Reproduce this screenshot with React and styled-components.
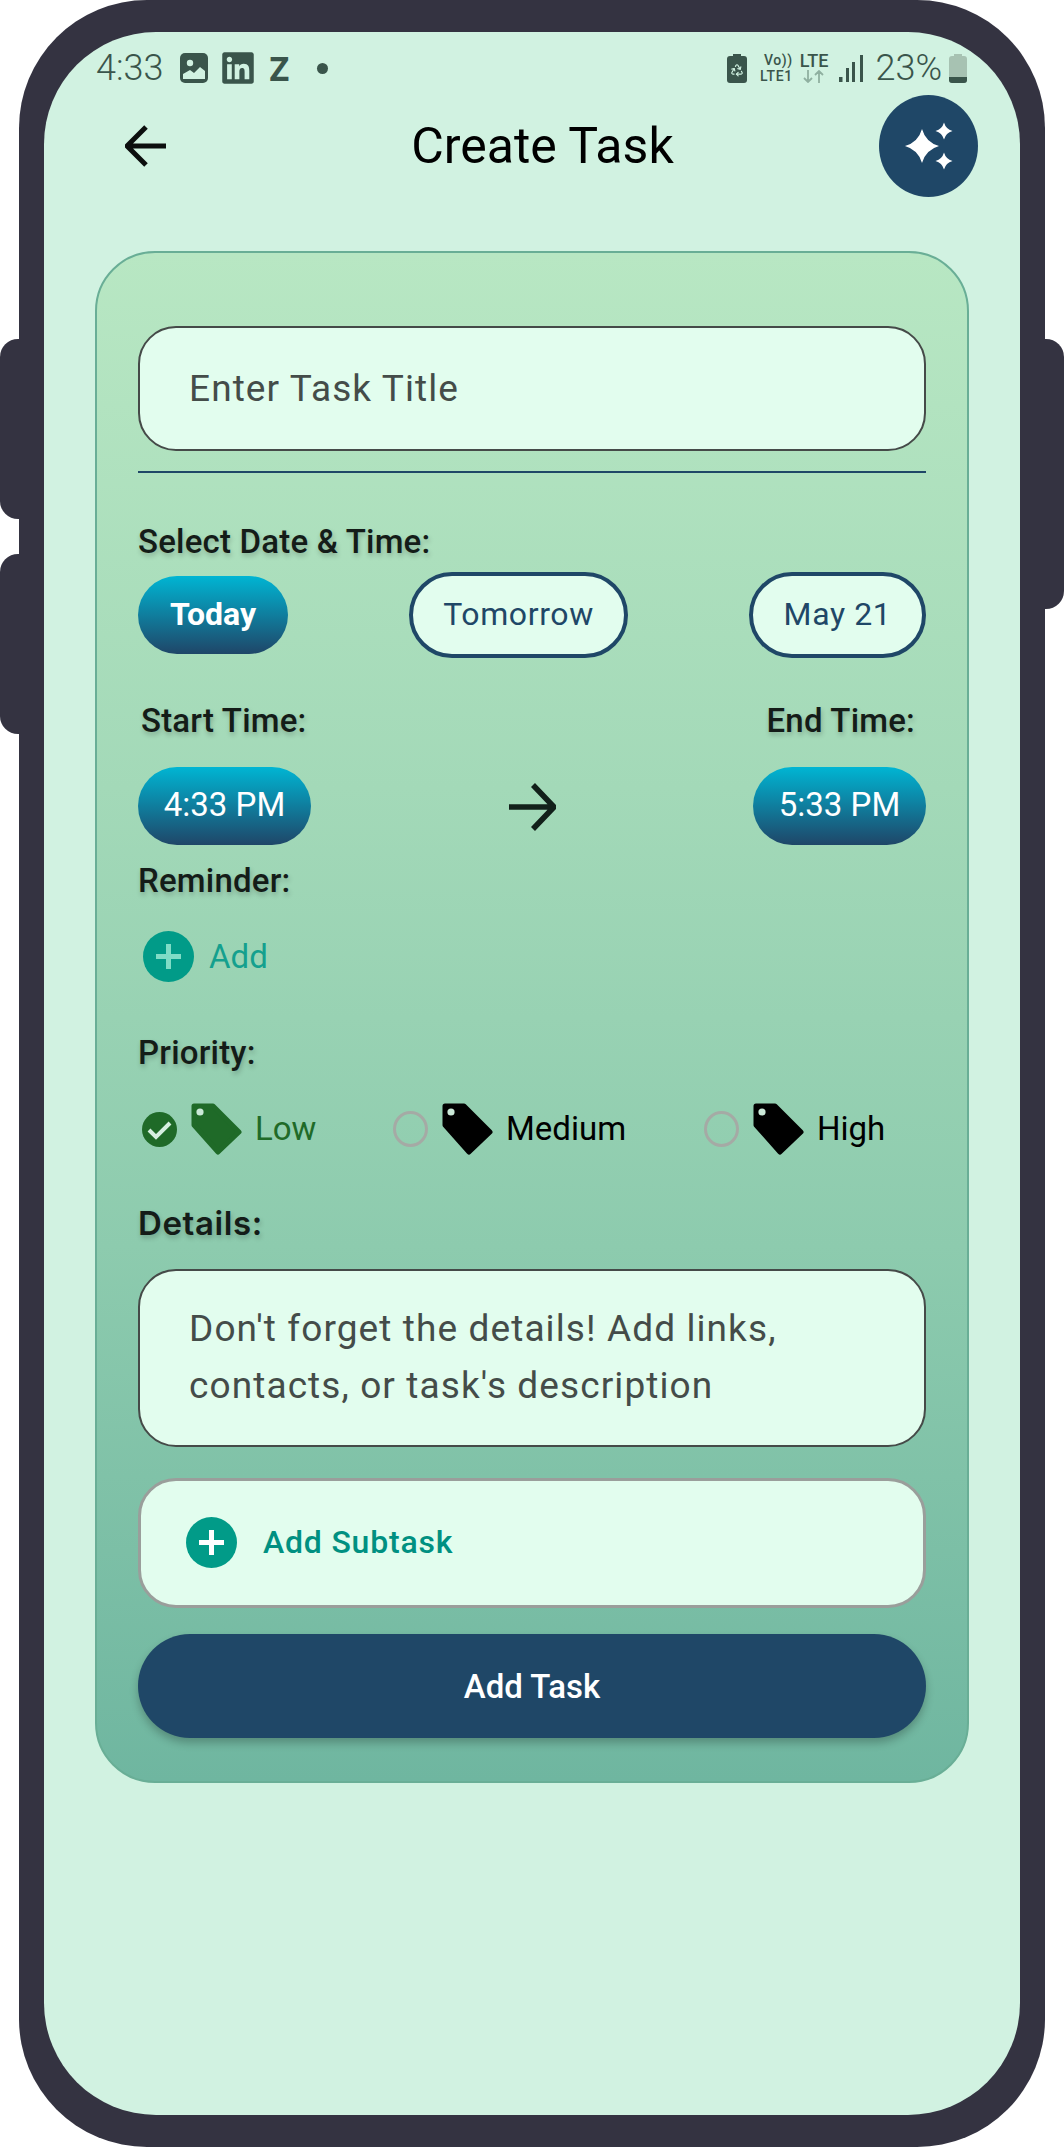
import React from "react";
import styled, { createGlobalStyle } from "styled-components";
import { FaLinkedin } from "react-icons/fa";
import { Recycle } from "lucide-react";

const GlobalStyle = createGlobalStyle`
  html, body {
    margin: 0;
    padding: 0;
    background: #ffffff;
    font-family: Roboto, "Liberation Sans", sans-serif;
  }
  * { box-sizing: border-box; }
`;

const NAVY = "#1f4767";
const MINT = "#e2fdee";
const SCREEN = "#d1f2e1";
const TEAL = "#019b88";
const INK = "#3a554b";

const Stage = styled.div`
  position: relative;
  width: 1064px;
  height: 2147px;
  padding: 0 19px;
  overflow: hidden;
`;

const SideButton = styled.div`
  position: absolute;
  top: ${(p) => p.$top}px;
  height: ${(p) => p.$height}px;
  width: 30px;
  background: #343341;
  ${(p) => (p.$right ? "right: 0; border-radius: 0 18px 18px 0;" : "left: 0; border-radius: 18px 0 0 18px;")}
`;

const Frame = styled.div`
  position: relative;
  height: 2147px;
  padding: 32px 25px;
  background: #343341;
  border-radius: 128px;
`;

const Screen = styled.div`
  height: 2083px;
  background: ${SCREEN};
  border-radius: 112px;
  overflow: hidden;
`;

const StatusBar = styled.div`
  display: flex;
  justify-content: space-between;
  align-items: center;
  height: 36px;
  margin-top: 18px;
  padding: 0 53px 0 52px;
  color: ${INK};
`;

const StatusGroup = styled.div`
  display: flex;
  align-items: center;
`;

const StatusText = styled.span`
  font-size: 36px;
  font-weight: 300;
  line-height: 36px;
`;

const ZMark = styled.span`
  font-family: "Open Sans", sans-serif;
  font-size: 34px;
  font-weight: 700;
  line-height: 36px;
  margin-left: 13px;
`;

const Dot = styled.span`
  width: 11px;
  height: 11px;
  border-radius: 50%;
  background: ${INK};
  margin-left: 28px;
`;

const NetStack = styled.div`
  display: flex;
  flex-direction: column;
  align-items: ${(p) => p.$align || "flex-start"};
  margin-left: ${(p) => p.$left}px;
  font-size: ${(p) => p.$size}px;
  font-weight: 500;
  line-height: 16.5px;
  letter-spacing: ${(p) => p.$spacing || 0}px;
`;

const Header = styled.header`
  display: flex;
  align-items: center;
  height: 102px;
  margin-top: 9px;
  padding: 0 42px 0 81px;
`;

const Title = styled.h1`
  flex: 1;
  margin: 0;
  padding-left: 40px;
  text-align: center;
  color: #000;
  font-size: 50px;
  font-weight: 400;
  line-height: 56px;
`;

const MagicButton = styled.button`
  width: 99px;
  height: 102px;
  padding: 0;
  border: 0;
  border-radius: 50%;
  background: ${NAVY};
  display: flex;
`;

const Card = styled.section`
  margin: 54px 51px 0 51px;
  padding: 73px 41px 43px;
  border: 2px solid #69ae96;
  border-radius: 60px;
  background: linear-gradient(180deg, #b8e7c3 0%, #a3d9b8 35%, #8dcbae 65%, #6fb6a0 100%);
`;

const TextBox = styled.div`
  height: ${(p) => p.$height}px;
  margin-top: ${(p) => p.$top || 0}px;
  padding: ${(p) => p.$pad}px 0 0 49px;
  background: ${MINT};
  border: 2.5px solid #454a48;
  border-radius: 38px;
  color: #444c49;
  font-size: 37px;
  line-height: 57px;
  letter-spacing: 1.1px;
`;

const Divider = styled.div`
  height: 2px;
  margin-top: 20px;
  background: ${NAVY};
`;

const Label = styled.div`
  margin-top: ${(p) => p.$top}px;
  color: #141c18;
  font-size: 33px;
  font-weight: 500;
  line-height: 40px;
  letter-spacing: 0.2px;
  text-shadow: 1px 3px 5px rgba(0, 0, 0, 0.22);
`;

const DetailsLabel = styled(Label)`
  font-family: Inter, sans-serif;
  font-size: 33px;
  font-weight: 600;
  letter-spacing: 0.6px;
`;

const Row = styled.div`
  display: flex;
  justify-content: space-between;
  align-items: center;
  margin-top: ${(p) => p.$top}px;
`;

const GradientChip = styled.div`
  display: flex;
  align-items: center;
  justify-content: center;
  width: ${(p) => p.$width}px;
  height: 78px;
  padding-bottom: 3px;
  border-radius: 39px;
  background: linear-gradient(180deg, #00b5d3 0%, #1f4668 100%);
  color: #fff;
  font-size: ${(p) => (p.$bold ? 32 : 33)}px;
  font-weight: ${(p) => (p.$bold ? 700 : 400)};
`;

const OutlineChip = styled.div`
  display: flex;
  align-items: center;
  justify-content: center;
  width: ${(p) => p.$width}px;
  height: 86px;
  padding-bottom: 2px;
  border: 4px solid ${NAVY};
  border-radius: 43px;
  background: ${MINT};
  color: ${NAVY};
  font-size: 32px;
  letter-spacing: 0.6px;
`;

const LabelRow = styled.div`
  display: flex;
  justify-content: space-between;
  padding: 0 11px 0 3px;
`;

const AddRow = styled.div`
  display: flex;
  align-items: center;
  gap: 15px;
  margin-top: 30px;
  padding-left: 5px;
  color: #14a08e;
  font-size: 33px;
`;

const PriorityRow = styled.div`
  display: grid;
  grid-template-columns: 251px 311px 1fr;
  margin-top: 30px;
  padding-left: 4px;
`;

const PriorityItem = styled.div`
  display: flex;
  align-items: center;
  height: 52px;
  color: ${(p) => (p.$active ? "#1f6a28" : "#000")};
  font-size: 33px;
`;

const Radio = styled.span`
  width: 35px;
  height: 36px;
  border: 3px solid #a5aaa5;
  border-radius: 50%;
`;

const PriorityText = styled.span`
  margin-left: 13px;
  padding-bottom: 2px;
`;

const SubtaskBox = styled.div`
  display: flex;
  align-items: center;
  gap: 26px;
  height: 130px;
  margin-top: 31px;
  padding: 0 0 2px 45px;
  background: ${MINT};
  border: 3px solid #9a9e9b;
  border-radius: 38px;
  color: #009081;
  font-size: 32px;
  font-weight: 500;
  letter-spacing: 0.8px;
`;

const SubmitButton = styled.button`
  display: block;
  width: 100%;
  height: 104px;
  margin-top: 26px;
  border: 0;
  border-radius: 52px;
  background: ${NAVY};
  box-shadow: 0 5px 9px rgba(0, 0, 0, 0.24);
  color: #fff;
  font-family: inherit;
  font-size: 33px;
  font-weight: 500;
`;

const Star = ({ x, y, r }) => {
  const k = r * 0.22;
  return (
    <path
      d={`M${x} ${y - r}Q${x + k} ${y - k} ${x + r} ${y}Q${x + k} ${y + k} ${x} ${y + r}Q${x - k} ${y + k} ${x - r} ${y}Q${x - k} ${y - k} ${x} ${y - r}Z`}
      fill="#fff"
    />
  );
};

const Sparkles = () => (
  <svg width="99" height="102" viewBox="0 0 99 102">
    <Star x={43} y={51} r={17} />
    <Star x={65} y={36} r={8.5} />
    <Star x={65} y={66} r={8.5} />
  </svg>
);

const ImageIcon = () => (
  <svg width="28" height="30" viewBox="0 0 28 30" style={{ marginLeft: 17 }}>
    <rect width="28" height="30" rx="5" fill={INK} />
    <circle cx="10" cy="10" r="3.2" fill={SCREEN} />
    <path d="M3 26v-5l7 -4 4 3 6-6 5 4v8z" fill={SCREEN} />
  </svg>
);

const BatteryBox = styled.div`
  position: relative;
  display: flex;
`;

const RecycleMark = styled(Recycle)`
  position: absolute;
  left: 3px;
  top: 9px;
  color: ${SCREEN};
`;

const BatterySaver = () => (
  <BatteryBox>
    <svg width="20" height="29" viewBox="0 0 20 29">
      <rect x="6" width="8" height="4" fill={INK} />
      <rect y="2" width="20" height="27" rx="3" fill={INK} />
    </svg>
    <RecycleMark size={14} strokeWidth={2} />
  </BatteryBox>
);

const Signal = () => (
  <svg width="24" height="27" viewBox="0 0 24 27" style={{ marginLeft: 11 }}>
    <rect x="0" y="22" width="3.5" height="5" fill={INK} />
    <rect x="7" y="13" width="3" height="14" fill={INK} />
    <rect x="13" y="7" width="3" height="20" fill={INK} />
    <rect x="21" y="0" width="3" height="27" fill={INK} />
  </svg>
);

const Battery = () => (
  <svg width="18" height="29" viewBox="0 0 18 29" style={{ marginLeft: 7 }}>
    <rect x="5" width="8" height="3" fill="#a7c2b2" />
    <rect y="2" width="18" height="27" rx="3" fill="#a7c2b2" />
    <path d="M0 23h18v3a3 3 0 0 1-3 3H3a3 3 0 0 1-3-3z" fill={INK} />
  </svg>
);

const NetArrows = () => (
  <svg width="22" height="13" viewBox="0 0 22 13">
    <path d="M5 0v12M1 8l4 4 4-4M16 13V1M12 5l4-4 4 4" fill="none" stroke="#8fb0a0" strokeWidth="1.8" />
  </svg>
);

const BackArrow = () => (
  <svg width="41" height="42" viewBox="0 0 41 42">
    <path d="M41 21H3M21 2L2 21l19 19" fill="none" stroke="#0c0f0e" strokeWidth="5" />
  </svg>
);

const NextArrow = () => (
  <svg width="47" height="48" viewBox="0 0 47 48" style={{ marginTop: 2 }}>
    <path d="M0 24h44M24 2l21 22-21 22" fill="none" stroke="#12201a" strokeWidth="5.5" />
  </svg>
);

const PlusCircle = ({ plus }) => (
  <svg width="51" height="51" viewBox="0 0 51 51">
    <circle cx="25.5" cy="25.5" r="25.5" fill={TEAL} />
    <path d="M25.5 13v25M13 25.5h25" stroke={plus} strokeWidth="5" />
  </svg>
);

const Tag = ({ color, hole }) => (
  <svg width="51" height="52" viewBox="0 0 51 52" style={{ marginLeft: 14 }}>
    <path d="M3 3h19l26 26-21 20L3 22z" fill={color} stroke={color} strokeWidth="5" strokeLinejoin="round" />
    <circle cx="9" cy="9" r="3.6" fill={hole} />
  </svg>
);

const CheckBadge = () => (
  <svg width="35" height="37" viewBox="0 0 35 37">
    <circle cx="17.5" cy="18.5" r="17.5" fill="#1f6a28" />
    <path d="M7 19l7 7 14-14" fill="none" stroke="#d6efe0" strokeWidth="4" />
  </svg>
);

const priorities = [
  { name: "Low", active: true },
  { name: "Medium" },
  { name: "High" },
];

export default function App() {
  return (
    <Stage>
      <GlobalStyle />
      <SideButton $top={339} $height={180} />
      <SideButton $top={554} $height={180} />
      <SideButton $right $top={339} $height={270} />
      <Frame>
        <Screen>
          <StatusBar>
            <StatusGroup>
              <StatusText>4:33</StatusText>
              <ImageIcon />
              <FaLinkedin size={36} style={{ marginLeft: 12 }} />
              <ZMark>Z</ZMark>
              <Dot />
            </StatusGroup>
            <StatusGroup>
              <BatterySaver />
              <NetStack $left={13} $size={14} $spacing={0.6} $align="flex-end">
                <span>Vo))</span>
                <span>LTE1</span>
              </NetStack>
              <NetStack $left={7} $size={18} $align="center">
                <span>LTE</span>
                <NetArrows />
              </NetStack>
              <Signal />
              <StatusText style={{ marginLeft: 12 }}>23%</StatusText>
              <Battery />
            </StatusGroup>
          </StatusBar>

          <Header>
            <BackArrow />
            <Title>Create Task</Title>
            <MagicButton>
              <Sparkles />
            </MagicButton>
          </Header>

          <Card>
            <TextBox $height={125} $pad={32}>Enter Task Title</TextBox>
            <Divider />

            <Label $top={49}>Select Date &amp; Time:</Label>
            <Row $top={10}>
              <GradientChip $bold $width={150}>Today</GradientChip>
              <OutlineChip $width={219}>Tomorrow</OutlineChip>
              <OutlineChip $width={177}>May 21</OutlineChip>
            </Row>

            <LabelRow>
              <Label $top={43}>Start Time:</Label>
              <Label $top={43}>End Time:</Label>
            </LabelRow>
            <Row $top={26}>
              <GradientChip $width={173}>4:33 PM</GradientChip>
              <NextArrow />
              <GradientChip $width={173}>5:33 PM</GradientChip>
            </Row>

            <Label $top={16}>Reminder:</Label>
            <AddRow>
              <PlusCircle plus="#7fdcc6" />
              Add
            </AddRow>

            <Label $top={51}>Priority:</Label>
            <PriorityRow>
              {priorities.map((item) => (
                <PriorityItem key={item.name} $active={item.active}>
                  {item.active ? <CheckBadge /> : <Radio />}
                  <Tag color={item.active ? "#1f6a28" : "#000"} hole="#cbe9d8" />
                  <PriorityText>{item.name}</PriorityText>
                </PriorityItem>
              ))}
            </PriorityRow>

            <DetailsLabel $top={48}>Details:</DetailsLabel>
            <TextBox $height={178} $top={26} $pad={29}>
              Don't forget the details! Add links,
              <br />
              contacts, or task's description
            </TextBox>

            <SubtaskBox>
              <PlusCircle plus="#fff" />
              Add Subtask
            </SubtaskBox>
            <SubmitButton>Add Task</SubmitButton>
          </Card>
        </Screen>
      </Frame>
    </Stage>
  );
}
